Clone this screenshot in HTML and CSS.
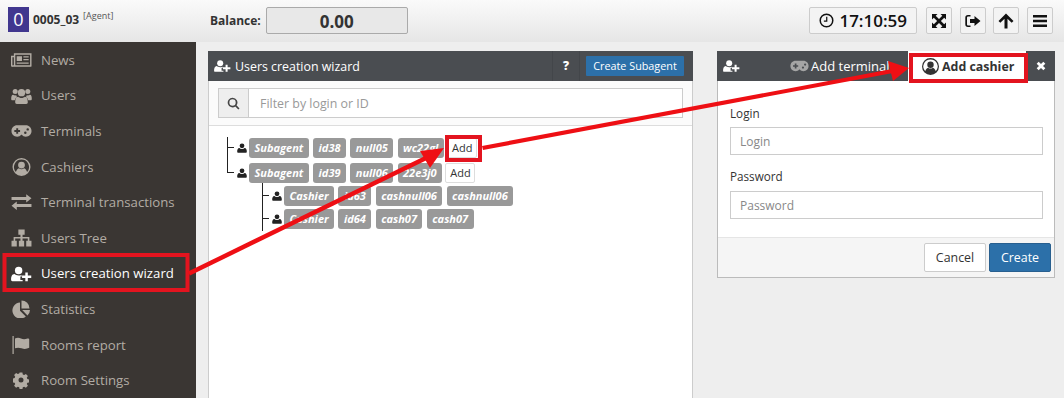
FILE: index.html
```html
<!DOCTYPE html>
<html lang="en">
<head>
<meta charset="utf-8">
<title>Users creation wizard</title>
<link rel="stylesheet" href="styles.css">
</head>
<body>
<svg class="defs" width="0" height="0">
  <defs>
    <symbol id="i-user" viewBox="0 0 16 16"><circle cx="8" cy="4.400" r="3.800"/><path d="M1.600 15.500c-.8 0-1.300-.5-1.300-1.400 0-3 .8-6 3.600-6 .7.600 2.200 1.600 4.100 1.600s3.400-1 4.100-1.600c2.800 0 3.600 3 3.600 6 0 .9-.5 1.400-1.300 1.400z"/></symbol>
    <symbol id="i-user-plus" viewBox="0 0 22 16"><circle cx="8" cy="4.400" r="3.900"/><path d="M1.400 15.500c-.8 0-1.300-.5-1.300-1.400 0-3 .8-6 3.600-6 .7.600 2.300 1.600 4.300 1.600 1.100 0 2-.3 2.800-.7l.6 1.500h-1.600v3.700h2.400v1.300z"/><path d="M15 6.500h2.600v3.200h3.600v2.600h-3.600v3.200H15v-3.200h-3.400V9.700H15z"/></symbol>
    <symbol id="i-news" viewBox="0 0 22 16"><path fill-rule="evenodd" d="M3 1h18.500v13.200a1 1 0 0 1-1 1H1.500A1.400 1.400 0 0 1 0 13.800V3.500h3zM4.500 2.500v11H20v-11zM1.500 5v8.500h1.500V5zM6 4h5.500v5H6zm7 0h5.500v1.300H13zm0 3h5.500v1.300H13zM6 10.500h12.500v1.300H6z"/></symbol>
    <symbol id="i-users" viewBox="0 0 20 16"><circle cx="4" cy="3.800" r="2.400"/><circle cx="16" cy="3.800" r="2.400"/><circle cx="10" cy="4.800" r="3.500"/><path d="M5.500 15.500c-1 0-1.500-.6-1.500-1.500 0-2.500.7-5.200 2.800-5.200.7.600 1.800 1.200 3.200 1.200s2.500-.6 3.200-1.200c2.100 0 2.800 2.700 2.800 5.200 0 .9-.5 1.500-1.500 1.500zM.2 10.500c0-2 .4-3.800 1.800-3.800.6.500 1.300.8 2.100.8.300 0 .6 0 .9-.1.100.6.300 1.100.7 1.500-1 .6-1.800 1.700-2.100 3.100H1.300c-.7 0-1.100-.5-1.100-1.500zm19.600 0c0-2-.4-3.800-1.800-3.800-.6.500-1.300.8-2.100.8-.3 0-.6 0-.9-.1-.1.600-.3 1.100-.7 1.500 1 .6 1.800 1.700 2.100 3.100h2.300c.7 0 1.100-.5 1.100-1.500z"/></symbol>
    <symbol id="i-pad" viewBox="0 0 22 14"><path fill-rule="evenodd" d="M6.500 1h9c3.500 0 6 2.700 6 6s-2.500 6-6 6c-1.800 0-3.200-.8-4.200-2h-.6c-1 1.200-2.400 2-4.200 2C3 13 .5 10.300.5 7s2.500-6 6-6zM5.500 4v2H3.500v2h2v2h2V8h2V6h-2V4zM15 7.500a1.300 1.300 0 1 0 0 2.600 1.300 1.300 0 0 0 0-2.600zm2.500-3.500a1.300 1.300 0 1 0 0 2.600 1.300 1.300 0 0 0 0-2.600z"/></symbol>
    <symbol id="i-ring" viewBox="0 0 18 18"><path fill-rule="evenodd" d="M9 0a9 9 0 1 1 0 18A9 9 0 0 1 9 0zm0 1.500a7.500 7.500 0 0 0-5.600 12.500c.6-1.800 1.700-3.200 3-3.700C7.100 10.900 8 11.200 9 11.200s1.900-.3 2.600-.9c1.300.5 2.400 1.900 3 3.700A7.500 7.500 0 0 0 9 1.500zM9 3.700a3.400 3.400 0 1 1 0 6.800 3.400 3.400 0 0 1 0-6.800z"/></symbol>
    <symbol id="i-exchange" viewBox="0 0 20 16"><path d="M14.500 0.500 19.500 4.500 14.500 8.500V6H.5V3.200h14zM5.500 7.500V10h14v2.800h-14v2.700L.5 11.500z"/></symbol>
    <symbol id="i-sitemap" viewBox="0 0 20 16"><path d="M7 0h6v5h-2v2h6.500v3.500h2V16h-5v-5.500H16V8.500h-5v2h1.500V16h-5v-5.500H9v-2H4v2h1.500V16h-5v-5.500h2V7H9V5H7z"/></symbol>
    <symbol id="i-pie" viewBox="0 0 18 18"><path d="M7.500 2.500v8.200l5.800 5.700A8 8 0 1 1 7.500 2.500z"/><path d="M9 .5a8 8 0 0 1 8 8H9z"/><path d="M9.700 10h7.800a8 8 0 0 1-2.500 5.500z"/></symbol>
    <symbol id="i-flag" viewBox="0 0 20 18"><path d="M1 0h1.200v18H1z"/><path d="M3.500 2.500c2-1 4-1 6 0s4 1 6.500 0c1-.3 1.700 0 1.700.8v8.500c-2.500 1.300-5 1.500-7.700.5-2.500-.9-4.500-.8-6.500 0z"/></symbol>
    <symbol id="i-cog" viewBox="0 0 16 16"><path fill-rule="evenodd" d="M6.600.5h2.800l.4 2 1.400.6 1.700-1.100 2 2-1.100 1.700.6 1.400 2 .4v2.800l-2 .4-.6 1.400 1.100 1.700-2 2-1.700-1.100-1.400.6-.4 2H6.600l-.4-2-1.400-.6-1.700 1.100-2-2 1.100-1.700-.6-1.400-2-.4V6.500l2-.4.6-1.400L1.100 3l2-2 1.700 1.100 1.400-.6zM8 5.500a2.500 2.500 0 1 0 0 5 2.500 2.500 0 0 0 0-5z"/></symbol>
    <symbol id="i-clock" viewBox="0 0 16 16"><path fill-rule="evenodd" d="M8 .5a7.500 7.500 0 1 1 0 15A7.500 7.500 0 0 1 8 .5zm0 1.600a5.900 5.900 0 1 0 0 11.800A5.900 5.900 0 0 0 8 2.100zM7.600 4h1.300v5.200H5.200V7.900h2.400z"/></symbol>
    <symbol id="i-expand" viewBox="0 0 16 16"><path d="M1 1h5.500L4.700 2.800 8 6.100l3.300-3.300L9.500 1H15v5.500l-1.800-1.800L9.900 8l3.300 3.300 1.800-1.800V15H9.500l1.800-1.800L8 9.900l-3.300 3.300L6.500 15H1V9.500l1.800 1.800L6.100 8 2.800 4.700 1 6.500z"/></symbol>
    <symbol id="i-signout" viewBox="0 0 16 14"><path d="M5.500 1v1.600H3a1 1 0 0 0-1 1v6.800a1 1 0 0 0 1 1h2.500V13H3a2.700 2.700 0 0 1-2.700-2.700V3.700A2.700 2.700 0 0 1 3 1z"/><path d="M9.500 2 15.500 7l-6 5V9H5V5h4.500z"/></symbol>
    <symbol id="i-up" viewBox="0 0 16 16"><path d="M8 .5 15.500 8l-1.800 1.800-4.200-4.100V15.500h-3V5.700L2.300 9.800.5 8z"/></symbol>
    <symbol id="i-bars" viewBox="0 0 16 14"><path d="M1 1h14v2.400H1zm0 4.800h14v2.400H1zm0 4.800h14V13H1z"/></symbol>
    <symbol id="i-search" viewBox="0 0 16 16"><path fill-rule="evenodd" d="M6.800.8a6 6 0 0 1 4.900 9.500l3.700 3.700-1.500 1.500-3.700-3.700A6 6 0 1 1 6.800.8zm0 2.100a3.900 3.900 0 1 0 0 7.800 3.900 3.900 0 0 0 0-7.800z"/></symbol>
    <symbol id="i-close" viewBox="0 0 12 12"><path d="M3.200.8 6 3.600 8.800.8l2.400 2.400L8.400 6l2.800 2.800-2.400 2.400L6 8.400l-2.800 2.800L.8 8.800 3.600 6 .8 3.200z"/></symbol>
  </defs>
</svg>

<div class="page">
  <header class="topbar">
    <div class="account">
      <span class="avatar">0</span>
      <span class="login">0005_03</span>
      <span class="role">[Agent]</span>
    </div>
    <div class="balance">
      <span class="balance-label">Balance:</span>
      <span class="balance-value">0.00</span>
    </div>
    <div class="tools">
      <span class="tool time"><svg class="ic-clock"><use href="#i-clock"/></svg>17:10:59</span>
      <span class="tool square"><svg class="ic-tool"><use href="#i-expand"/></svg></span>
      <span class="tool square"><svg class="ic-tool"><use href="#i-signout"/></svg></span>
      <span class="tool square"><svg class="ic-tool"><use href="#i-up"/></svg></span>
      <span class="tool square"><svg class="ic-tool"><use href="#i-bars"/></svg></span>
    </div>
  </header>

  <div class="workspace">
    <nav class="sidebar">
      <a class="nav-item"><svg class="nav-icon"><use href="#i-news"/></svg>News</a>
      <a class="nav-item"><svg class="nav-icon"><use href="#i-users"/></svg>Users</a>
      <a class="nav-item"><svg class="nav-icon"><use href="#i-pad"/></svg>Terminals</a>
      <a class="nav-item"><svg class="nav-icon"><use href="#i-ring"/></svg>Cashiers</a>
      <a class="nav-item"><svg class="nav-icon"><use href="#i-exchange"/></svg>Terminal transactions</a>
      <a class="nav-item"><svg class="nav-icon"><use href="#i-sitemap"/></svg>Users Tree</a>
      <a class="nav-item active"><svg class="nav-icon"><use href="#i-user-plus"/></svg>Users creation wizard</a>
      <a class="nav-item"><svg class="nav-icon"><use href="#i-pie"/></svg>Statistics</a>
      <a class="nav-item"><svg class="nav-icon"><use href="#i-flag"/></svg>Rooms report</a>
      <a class="nav-item"><svg class="nav-icon small"><use href="#i-cog"/></svg>Room Settings</a>
    </nav>

    <main class="content">
      <section class="panel wizard">
        <div class="panel-head">
          <svg class="head-icon"><use href="#i-user-plus"/></svg>
          <span class="panel-title">Users creation wizard</span>
          <span class="help">?</span>
          <span class="btn-sub">Create Subagent</span>
        </div>
        <div class="filter-row">
          <div class="filter">
            <span class="filter-addon"><svg class="ic-search"><use href="#i-search"/></svg></span>
            <span class="filter-input">Filter by login or ID</span>
          </div>
        </div>
        <div class="tree">
          <div class="branch level-1">
            <div class="tree-row">
              <svg class="ic-user"><use href="#i-user"/></svg>
              <span class="chip">Subagent</span><span class="chip">id38</span><span class="chip">null05</span><span class="chip">wc22gl</span>
              <span class="add">Add</span>
            </div>
            <div class="tree-row">
              <svg class="ic-user"><use href="#i-user"/></svg>
              <span class="chip">Subagent</span><span class="chip">id39</span><span class="chip">null06</span><span class="chip">22e3j0</span>
              <span class="add">Add</span>
            </div>
          </div>
          <div class="branch level-2">
            <div class="tree-row">
              <svg class="ic-user"><use href="#i-user"/></svg>
              <span class="chip">Cashier</span><span class="chip">id63</span><span class="chip">cashnull06</span><span class="chip">cashnull06</span>
            </div>
            <div class="tree-row">
              <svg class="ic-user"><use href="#i-user"/></svg>
              <span class="chip">Cashier</span><span class="chip">id64</span><span class="chip">cash07</span><span class="chip">cash07</span>
            </div>
          </div>
        </div>
      </section>

      <section class="panel form-panel">
        <div class="panel-head tabs">
          <svg class="head-icon tab-lead"><use href="#i-user-plus"/></svg>
          <span class="tab"><svg class="ic-pad"><use href="#i-pad"/></svg>Add terminal</span>
          <span class="tab current"><svg class="ic-ring"><use href="#i-ring"/></svg>Add cashier</span>
          <span class="tab-close"><svg class="ic-close"><use href="#i-close"/></svg></span>
        </div>
        <div class="form-body">
          <label class="field-label">Login</label>
          <div class="input">Login</div>
          <label class="field-label">Password</label>
          <div class="input">Password</div>
        </div>
        <div class="form-foot">
          <span class="btn">Cancel</span>
          <span class="btn primary">Create</span>
        </div>
      </section>
    </main>
  </div>
</div>

<svg class="annotations" viewBox="0 0 1064 400" width="1064" height="400">
  <g fill="none" stroke="#e3141f" stroke-width="4">
    <rect x="4.500" y="255" width="183" height="35"/>
    <rect x="447" y="137" width="33" height="23"/>
    <rect x="911" y="55" width="115" height="26"/>
  </g>
  <g fill="#ee0f14" stroke="none">
    <path d="M188 271.500 426 155.500 428 159.500 190 275.500z"/>
    <path d="M444 148 430 168 420 151z"/>
    <path d="M482 146 892 69 893 73 483 150z"/>
    <path d="M909 68 893 81 888 61z"/>
  </g>
</svg>
</body>
</html>
```

FILE: styles.css
```css
* { box-sizing: border-box; }
html, body { margin: 0; height: 400px; overflow: hidden; }
body {
  position: relative;
  background: #fff;
  font-family: "Open Sans", sans-serif;
  font-size: 13px;
  color: #333;
}
.defs { position: absolute; }
svg { fill: currentColor; display: block; flex: none; }

.page { height: 398px; display: flex; flex-direction: column; overflow: hidden; }

/* Top bar */
.topbar {
  height: 42px;
  flex: none;
  display: flex;
  align-items: flex-start;
  padding: 7px 11px 0 8px;
  background: linear-gradient(#fafafa, #e6e6e6);
}
.account { display: flex; align-items: flex-start; width: 202px; color: #333; }
.avatar {
  width: 21px; height: 25px;
  background: #41378f;
  color: #fff;
  font-size: 18px;
  line-height: 25px;
  text-align: center;
}
.login { margin: 5px 0 0 4px; font-size: 12px; line-height: 15px; font-weight: 700; }
.role { margin: 4px 0 0 4px; font-size: 9px; line-height: 10px; color: #555; }
.balance { display: flex; align-items: flex-start; }
.balance-label { margin-right: 5px; font-size: 12px; font-weight: 700; line-height: 27px; color: #333; }
.balance-value {
  width: 142px; height: 27px;
  background: #e8e8e8;
  border: 1px solid #aaa;
  border-radius: 2px;
  text-align: center;
  font-size: 17px;
  font-weight: 700;
  line-height: 27px;
  color: #333;
}
.tools { margin-left: auto; display: flex; gap: 7.600px; }
.tool {
  height: 27px;
  display: flex;
  align-items: center;
  justify-content: center;
  background: #f3f3f3;
  border: 1px solid #ccc;
  border-radius: 2px;
  color: #111;
}
.time { width: 108px; font-size: 17px; font-weight: 600; gap: 5px; margin-right: 1.400px; }
.square { width: 26px; }
.ic-clock { width: 15px; height: 15px; }
.ic-tool { width: 16px; height: 16px; }

/* Work area */
.workspace { flex: 1; min-height: 0; display: flex; }
.sidebar {
  width: 196px;
  flex: none;
  display: flex;
  flex-direction: column;
  background: #3a3633;
  box-shadow: 1px 0 0 #ccc;
}
.nav-item {
  height: 35.600px;
  flex: none;
  display: flex;
  align-items: center;
  padding-left: 41px;
  position: relative;
  font-size: 13.200px;
  color: #b2aca4;
  white-space: nowrap;
}
.nav-item.active { color: #fff; }
.nav-icon {
  position: absolute;
  left: 11px;
  top: 9px;
  width: 21px;
  height: 18px;
  color: #b2aca4;
}
.nav-icon.small { left: 13px; width: 16px; }
.active .nav-icon { color: #fff; }

.content {
  flex: 1;
  display: flex;
  align-items: flex-start;
  gap: 24px;
  padding: 9px 9px 0 12px;
  background: #eee;
  height: 100%;
}
.panel { background: #fff; display: flex; flex-direction: column; }
.wizard {
  width: 485px;
  height: 100%;
  border: solid #ccc;
  border-width: 0 1px;
}
.form-panel {
  width: 338px;
  border: solid #bbb;
  border-width: 0 1px 1px;
}
.panel-head {
  height: 30px;
  flex: none;
  display: flex;
  align-items: center;
  background: #4a4d51;
  color: #fff;
  margin: 0 -1px;
}
.head-icon { width: 17px; height: 14px; margin-left: 6px; }
.panel-title { margin-left: 4px; font-size: 12.400px; flex: 1; }
.help {
  width: 28px;
  height: 30px;
  margin-right: 6px;
  border-left: 1px solid #43464a;
  border-right: 1px solid #43464a;
  text-align: center;
  line-height: 30px;
  font-weight: 800;
  font-size: 12px;
}
.btn-sub {
  width: 98px;
  height: 20px;
  margin-right: 9px;
  background: #2c70a9;
  border-radius: 1px;
  text-align: center;
  font-size: 10.800px;
  line-height: 19px;
}
.filter-row {
  height: 45px;
  flex: none;
  padding: 7px 9px 0 9px;
  border-bottom: 1px solid #ddd;
  background: #fbfbfb;
}
.filter { display: flex; height: 30px; border: 1px solid #ccc; background: #fff; }
.filter-addon {
  width: 30px;
  background: #eee;
  border-right: 1px solid #ccc;
  display: flex;
  align-items: center;
  justify-content: center;
  color: #444;
}
.ic-search { width: 13px; height: 13px; }
.filter-input { padding-left: 11px; font-size: 12.400px; line-height: 30px; color: #999; }

/* Tree */
.tree { padding: 12px 0 0 18px; }
.branch { display: flex; flex-direction: column; position: relative; padding-left: 10px; }
.level-1 { gap: 5px; }
.level-2 { margin-left: 35px; margin-top: 3px; gap: 3px; }
.tree-row { display: flex; align-items: center; gap: 4.300px; height: 20px; position: relative; }
.tree-row::before {
  content: "";
  position: absolute;
  left: -10px;
  top: 9px;
  width: 7px;
  height: 1px;
  background: #222;
}
.branch::before {
  content: "";
  position: absolute;
  left: 0;
  top: -1px;
  width: 1px;
  background: #222;
}
.level-1::before { height: 35px; }
.level-2::before { top: -3px; height: 48px; }
.ic-user { width: 10px; height: 12px; color: #222; margin-right: -2.300px; }
.chip {
  height: 20px;
  padding: 0 5.500px;
  background: #999;
  border-radius: 3px;
  color: #fff;
  font-size: 11px;
  font-weight: 700;
  font-style: italic;
  line-height: 19px;
  white-space: nowrap;
}
.add {
  width: 30px;
  height: 20px;
  border: 1px solid #ddd;
  border-radius: 2px;
  background: #fff;
  color: #333;
  text-align: center;
  font-size: 11px;
  line-height: 18px;
  margin-left: -1px;
}

/* Form panel */
.tabs { overflow: hidden; }
.tab-lead { margin-left: 6px; }
.tab {
  display: flex;
  align-items: center;
  height: 30px;
  color: #fff;
  font-size: 13px;
  white-space: nowrap;
}
.tab:not(.current) { margin-left: 50px; width: 118px; gap: 2px; }
.tab.current {
  width: 118px;
  background: #fff;
  color: #333;
  font-weight: 700;
  font-size: 12.400px;
  gap: 3px;
  padding-left: 14px;
}
.ic-pad { width: 19px; height: 14px; color: #a5a5a5; }
.ic-ring { width: 17px; height: 17px; color: #333; }
.tab-close { flex: 1; display: flex; justify-content: center; }
.ic-close { width: 10px; height: 10px; color: #fff; }
.form-body { padding: 0 11px 0 12px; height: 157px; border-bottom: 1px solid #e5e5e5; }
.field-label { display: block; font-size: 11.700px; line-height: 17px; color: #333; padding-top: 24px; height: 46px; }
.input {
  height: 28px;
  padding-left: 9px;
  border: 1px solid #ccc;
  background: #fff;
  font-size: 12px;
  line-height: 28px;
  color: #888;
}
.input + .field-label { padding-top: 13px; height: 36px; }
.form-foot {
  height: 39px;
  display: flex;
  justify-content: flex-end;
  align-items: center;
  gap: 3px;
  padding-right: 3px;
  background: #f5f5f5;
}
.btn {
  width: 62px;
  height: 29px;
  background: #fff;
  border: 1px solid #ccc;
  border-radius: 2px;
  text-align: center;
  font-size: 12.400px;
  line-height: 27px;
  color: #333;
}
.btn.primary { background: #2c70a9; border-color: #285f8f; color: #fff; }

/* Annotation overlay */
.annotations { position: absolute; left: 0; top: 0; pointer-events: none; }
```
